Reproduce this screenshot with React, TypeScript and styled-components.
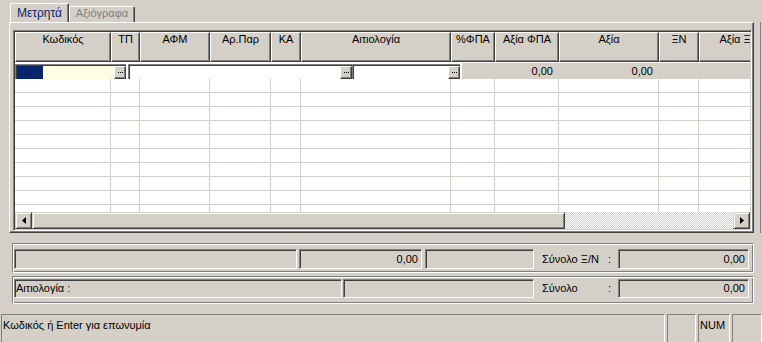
import styled, { createGlobalStyle } from "styled-components";

const FACE = "#d4d0c8";
const SHADOW = "#808080";
const DARK = "#404040";
const LIGHT = "#ffffff";

const GlobalStyle = createGlobalStyle`
  * { box-sizing: border-box; }
  html, body { margin: 0; padding: 0; background: ${FACE}; }
  body {
    font-family: "Liberation Sans", Arial, sans-serif;
    font-size: 11px;
    color: #000;
  }
`;

const Window = styled.div`
  width: 762px;
  height: 342px;
  overflow: hidden;
  display: flex;
  flex-direction: column;
  background: ${FACE};
  padding-top: 3px;
`;

const TabStrip = styled.div`
  display: flex;
  align-items: flex-end;
  height: 19px;
  margin-left: 10px;
`;

const Tab = styled.div<{ $active?: boolean; $width: number }>`
  flex: 0 0 ${(p) => p.$width}px;
  height: ${(p) => (p.$active ? 19 : 16)}px;
  border-top: 1px solid ${LIGHT};
  border-left: 1px solid ${LIGHT};
  border-right: 1px solid ${DARK};
  border-radius: 2px 2px 0 0;
  box-shadow: inset -1px 0 ${SHADOW};
  color: ${(p) => (p.$active ? "#0a246a" : SHADOW)};
  font-size: ${(p) => (p.$active ? 12 : 11)}px;
  text-align: center;
  padding-top: ${(p) => (p.$active ? 3 : 0)}px;
  line-height: 13px;
  white-space: nowrap;
`;

const TabArea = styled.div`
  display: flex;
  height: 211px;
`;

const TabPage = styled.div`
  flex: 0 0 745px;
  min-width: 0;
  margin-left: 9px;
  padding: 7px 1px 1px 3px;
  border-style: solid;
  border-width: 1px;
  border-color: ${LIGHT} ${DARK} ${DARK} ${LIGHT};
  box-shadow: inset -1px -1px ${SHADOW};
`;

const FrameEdge = styled.div`
  flex: 0 0 1px;
  margin: 0 1px 0 6px;
  background: ${SHADOW};
`;

const Grid = styled.div`
  height: 201px;
  display: flex;
  flex-direction: column;
  padding: 1px;
  border-style: solid;
  border-width: 1px;
  border-color: ${SHADOW} ${LIGHT} ${LIGHT} ${SHADOW};
  box-shadow: inset 1px 1px ${DARK}, inset -1px -1px ${FACE};
  background: ${FACE};
  overflow: hidden;
`;

const HeaderRow = styled.div`
  display: flex;
  flex: 0 0 30px;
  overflow: hidden;
`;

const HeaderCell = styled.div<{ $width: number }>`
  flex: 0 0 ${(p) => p.$width}px;
  border-style: solid;
  border-width: 1px;
  border-color: ${LIGHT} ${DARK} ${DARK} ${LIGHT};
  box-shadow: inset -1px -1px ${SHADOW};
  text-align: center;
  white-space: nowrap;
  overflow: hidden;
  line-height: 12px;
`;

const Body = styled.div`
  flex: 0 0 150px;
  background: ${LIGHT};
  overflow: hidden;
`;

const EditRow = styled.div`
  display: flex;
  align-items: flex-end;
  height: 17px;
`;

const Editor = styled.div<{ $width: number; $gap?: number }>`
  flex: 0 0 ${(p) => p.$width}px;
  height: 15px;
  margin-right: ${(p) => p.$gap ?? 0}px;
  display: flex;
  border-top: 1px solid ${SHADOW};
  border-left: 1px solid ${SHADOW};
  box-shadow: inset 1px 1px ${DARK};
  padding: 1px 0 0 1px;
  background: ${LIGHT};
`;

const Field = styled.div<{ $tone: "navy" | "note" | "plain"; $width?: number }>`
  flex: ${(p) => (p.$width ? `0 0 ${p.$width}px` : "1 1 auto")};
  background: ${(p) =>
    p.$tone === "navy" ? "#0a246a" : p.$tone === "note" ? "#ffffe1" : LIGHT};
`;

const DotsButton = styled.div`
  flex: 0 0 12px;
  height: 13px;
  display: flex;
  align-items: center;
  justify-content: center;
  background: ${FACE};
  border-style: solid;
  border-width: 1px;
  border-color: ${LIGHT} ${DARK} ${DARK} ${LIGHT};
  box-shadow: inset -1px -1px ${SHADOW};
`;

const ReadOnly = styled.div`
  flex: 1 1 auto;
  height: 16px;
  display: flex;
  background: ${FACE};
`;

const ValueCell = styled.div<{ $width: number }>`
  flex: 0 0 ${(p) => p.$width}px;
  text-align: right;
  padding-right: 6px;
  line-height: 16px;
`;

const Row = styled.div`
  display: flex;
  height: 14px;
`;

const Cell = styled.div<{ $width: number }>`
  flex: 0 0 ${(p) => p.$width}px;
  border-right: 1px solid ${FACE};
  border-bottom: 1px solid ${FACE};
`;

const ScrollBar = styled.div`
  flex: 0 0 17px;
  display: flex;
`;

const Raised = styled.div<{ $width?: number }>`
  flex: ${(p) => (p.$width ? `0 0 ${p.$width}px` : "1 1 auto")};
  display: flex;
  align-items: center;
  justify-content: center;
  background: ${FACE};
  border-style: solid;
  border-width: 1px;
  border-color: ${FACE} ${DARK} ${DARK} ${FACE};
  box-shadow: inset 1px 1px ${LIGHT}, inset -1px -1px ${SHADOW};
`;

const Track = styled.div`
  flex: 1 1 auto;
  background-color: ${FACE};
  background-image: conic-gradient(${LIGHT} 25%, ${FACE} 0 50%, ${LIGHT} 0 75%, ${FACE} 0);
  background-size: 2px 2px;
`;

const Totals = styled.div`
  display: flex;
  flex-direction: column;
  gap: 3px;
  margin: 10px 8px 0 12px;
`;

const Panel = styled.div<{ $top: number; $bottom: number }>`
  display: flex;
  align-items: flex-start;
  padding: ${(p) => p.$top}px 0 ${(p) => p.$bottom}px 1px;
  border-style: solid;
  border-width: 1px;
  border-color: ${SHADOW} ${LIGHT} ${LIGHT} ${SHADOW};
  box-shadow: inset 1px 1px ${LIGHT}, inset -1px -1px ${SHADOW};
`;

const Box = styled.div<{ $width: number; $height: number; $gap?: number; $left?: boolean }>`
  flex: 0 0 ${(p) => p.$width}px;
  height: ${(p) => p.$height}px;
  margin-right: ${(p) => p.$gap ?? 0}px;
  border-style: solid;
  border-width: 1px;
  border-color: ${SHADOW} ${LIGHT} ${LIGHT} ${SHADOW};
  box-shadow: inset 1px 1px ${DARK}, inset -1px -1px ${FACE};
  padding: 0 3px 0 1px;
  text-align: ${(p) => (p.$left ? "left" : "right")};
  line-height: ${(p) => p.$height - 2}px;
  white-space: nowrap;
  overflow: hidden;
`;

const Label = styled.div<{ $height: number }>`
  flex: 0 0 84px;
  height: ${(p) => p.$height}px;
  display: flex;
  justify-content: space-between;
  padding: 0 7px 0 8px;
  line-height: ${(p) => p.$height}px;
  white-space: nowrap;
`;

const StatusBar = styled.div`
  display: flex;
  gap: 2px;
  height: 30px;
  margin-top: 10px;
  padding-left: 1px;
  flex-shrink: 0;
`;

const StatusPanel = styled.div<{ $width?: number }>`
  flex: ${(p) => (p.$width ? `0 0 ${p.$width}px` : "1 1 auto")};
  border-style: solid;
  border-width: 1px;
  border-color: ${SHADOW} ${LIGHT} ${LIGHT} ${SHADOW};
  padding: 4px 0 0 1px;
  line-height: 13px;
  white-space: nowrap;
`;

const columns = [
  { title: "Κωδικός", width: 96 },
  { title: "ΤΠ", width: 29 },
  { title: "ΑΦΜ", width: 70 },
  { title: "Αρ.Παρ", width: 61 },
  { title: "ΚΑ", width: 30 },
  { title: "Αιτιολογία", width: 150 },
  { title: "%ΦΠΑ", width: 44 },
  { title: "Αξία ΦΠΑ", width: 64 },
  { title: "Αξία", width: 100 },
  { title: "ΞΝ", width: 40 },
  { title: "Αξία ΞΝ", width: 80 },
];

const Dots = () => (
  <svg width="5" height="1" viewBox="0 0 5 1">
    <rect x="0" y="0" width="1" height="1" fill="#000" />
    <rect x="2" y="0" width="1" height="1" fill="#000" />
    <rect x="4" y="0" width="1" height="1" fill="#000" />
  </svg>
);

const Arrow = ({ dir }: { dir: "left" | "right" }) => (
  <svg width="4" height="7" viewBox="0 0 4 7">
    <polygon points={dir === "left" ? "4,0 0,3.5 4,7" : "0,0 4,3.5 0,7"} fill="#000" />
  </svg>
);

const App = (): JSX.Element => {
  return (
    <Window>
      <GlobalStyle />
      <TabStrip>
        <Tab $active $width={59}>Μετρητά</Tab>
        <Tab $width={66}>Αξιόγραφα</Tab>
      </TabStrip>
      <TabArea>
        <TabPage>
          <Grid>
            <HeaderRow>
              {columns.map((c) => (
                <HeaderCell key={c.title} $width={c.width}>
                  {c.title}
                </HeaderCell>
              ))}
            </HeaderRow>
            <Body>
              <EditRow>
                <Editor $width={111} $gap={2}>
                  <Field $tone="navy" $width={26} />
                  <Field $tone="note" />
                  <DotsButton>
                    <Dots />
                  </DotsButton>
                </Editor>
                <Editor $width={224}>
                  <Field $tone="plain" />
                  <DotsButton>
                    <Dots />
                  </DotsButton>
                </Editor>
                <Editor $width={108} $gap={2}>
                  <Field $tone="plain" />
                  <DotsButton>
                    <Dots />
                  </DotsButton>
                </Editor>
                <ReadOnly>
                  <ValueCell $width={97}>0,00</ValueCell>
                  <ValueCell $width={100}>0,00</ValueCell>
                </ReadOnly>
              </EditRow>
              {Array.from({ length: 10 }).map((_, r) => (
                <Row key={r}>
                  {columns.map((c) => (
                    <Cell key={c.title} $width={c.width} />
                  ))}
                </Row>
              ))}
            </Body>
            <ScrollBar>
              <Raised $width={17}>
                <Arrow dir="left" />
              </Raised>
              <Raised $width={533} />
              <Track />
              <Raised $width={17}>
                <Arrow dir="right" />
              </Raised>
            </ScrollBar>
          </Grid>
        </TabPage>
        <FrameEdge />
      </TabArea>
      <Totals>
        <Panel $top={5} $bottom={3}>
          <Box $width={283} $height={20} $gap={2} />
          <Box $width={123} $height={20} $gap={3}>0,00</Box>
          <Box $width={109} $height={20} />
          <Label $height={20}>
            <span>Σύνολο Ξ/Ν</span>
            <span>:</span>
          </Label>
          <Box $width={131} $height={20}>0,00</Box>
        </Panel>
        <Panel $top={2} $bottom={5}>
          <Box $width={328} $height={19} $gap={1} $left>
            Αιτιολογία :
          </Box>
          <Box $width={191} $height={19} />
          <Label $height={19}>
            <span>Σύνολο</span>
            <span>:</span>
          </Label>
          <Box $width={131} $height={19}>0,00</Box>
        </Panel>
      </Totals>
      <StatusBar>
        <StatusPanel $width={664}>Κωδικός ή Enter για επωνυμία</StatusPanel>
        <StatusPanel $width={29} />
        <StatusPanel $width={32}>NUM</StatusPanel>
        <StatusPanel />
      </StatusBar>
    </Window>
  );
};

export default App;
